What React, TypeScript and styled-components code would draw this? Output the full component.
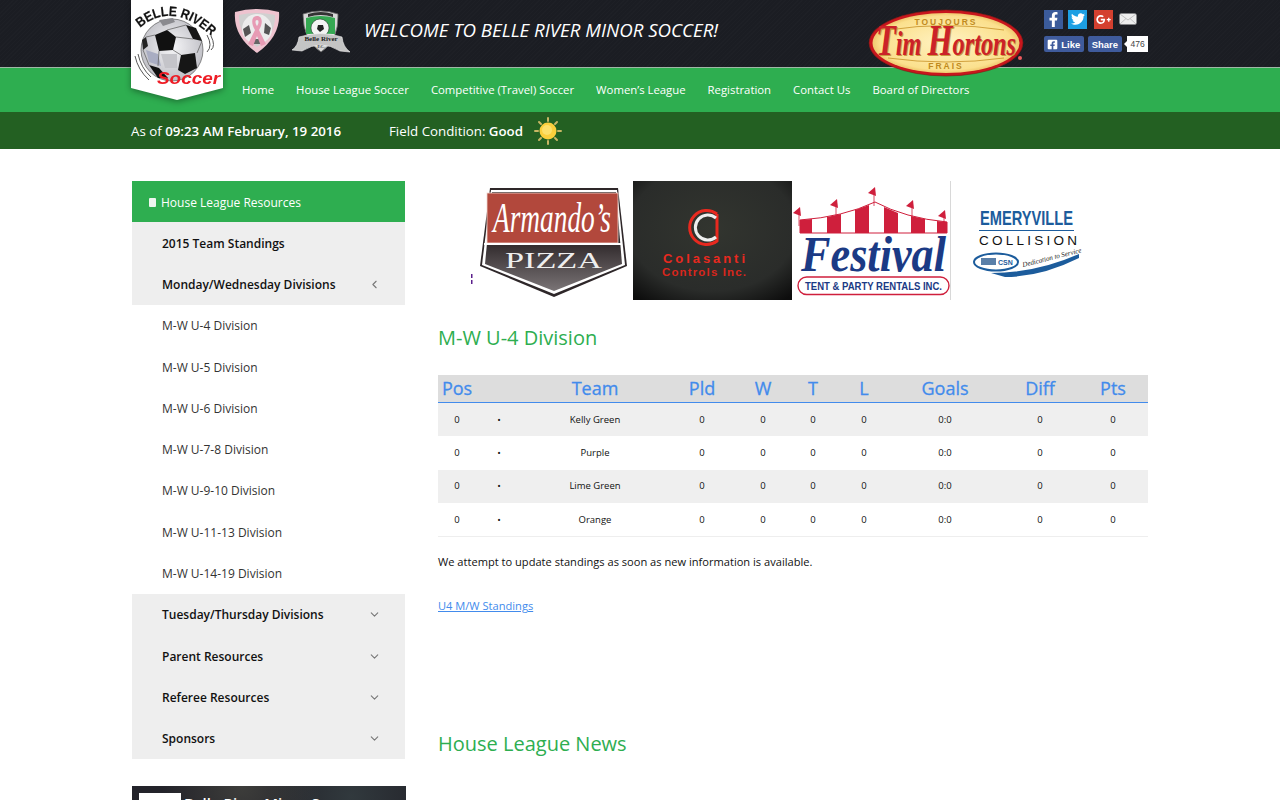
import React from 'react';
import styled, { createGlobalStyle } from 'styled-components';
import { FaFacebookF, FaFacebookSquare, FaTwitter, FaGooglePlusG } from 'react-icons/fa';
import { FiChevronDown, FiChevronLeft } from 'react-icons/fi';

const GlobalStyle = createGlobalStyle`
  html, body {
    margin: 0;
    padding: 0;
    background: #fff;
    overflow-x: hidden;
  }
  body {
    font-family: "Open Sans", "Liberation Sans", sans-serif;
    font-size: 12px;
    color: #222;
  }
`;

const Wrap = styled.div`
  width: 1016px;
  margin: 0 auto;
  position: relative;
`;

const TopBar = styled.header`
  height: 67px;
  background-color: #1b1d23;
  background-image: repeating-linear-gradient(135deg, rgba(255, 255, 255, 0.01) 0 1px, transparent 1px 3px);
  border-bottom: 1px solid #9fb8a6;
`;

const TopRow = styled(Wrap)`
  display: flex;
  align-items: flex-start;
  height: 67px;
`;

const LogoHolder = styled.div`
  position: absolute;
  left: -1px;
  top: 0;
  z-index: 3;
  width: 92px;
  height: 102px;
  filter: drop-shadow(0 2px 3px rgba(0, 0, 0, 0.35));
`;

const Badge = styled.div<{ $left: number; $width: number; $top: number }>`
  margin-left: ${({ $left }) => $left}px;
  margin-top: ${({ $top }) => $top}px;
  width: ${({ $width }) => $width}px;
  flex: none;
  line-height: 0;
`;

const Welcome = styled.div`
  margin-left: 13px;
  margin-top: 17px;
  width: 504px;
  flex: none;
  color: #fff;
  font-size: 18.7px;
  font-style: italic;
  font-weight: 400;
  line-height: 25px;
  white-space: nowrap;
`;

const TimHolder = styled.div`
  position: absolute;
  left: 736px;
  top: 8px;
  z-index: 3;
  line-height: 0;
`;

const Social = styled.div`
  position: absolute;
  left: 912px;
  top: 9px;
  width: 104px;
`;

const IconRow = styled.div`
  display: flex;
  align-items: center;
  height: 20px;
`;

const IconTile = styled.span<{ $bg: string; $gap: number; $size: number }>`
  display: flex;
  align-items: center;
  justify-content: center;
  width: 19px;
  height: 19px;
  margin-right: ${({ $gap }) => $gap}px;
  background: ${({ $bg }) => $bg};
  color: #fff;
  font-size: ${({ $size }) => $size}px;
`;

const ShareRow = styled.div`
  display: flex;
  align-items: center;
  height: 16px;
  margin-top: 7px;
`;

const FbButton = styled.span<{ $width: number }>`
  display: flex;
  align-items: center;
  justify-content: center;
  gap: 3px;
  width: ${({ $width }) => $width}px;
  height: 16px;
  margin-right: 4px;
  background: #3f5b9c;
  border-radius: 2px;
  color: #fff;
  font-family: "Liberation Sans", Arial, sans-serif;
  font-size: 9.5px;
  font-weight: 700;
`;

const Count = styled.span`
  position: relative;
  width: 21px;
  height: 16px;
  margin-left: 1px;
  background: #fff;
  color: #444;
  font-family: "Liberation Sans", Arial, sans-serif;
  font-size: 8.5px;
  line-height: 16px;
  text-align: center;

  &::before {
    content: '';
    position: absolute;
    left: -3px;
    top: 5px;
    border-top: 3px solid transparent;
    border-bottom: 3px solid transparent;
    border-right: 3px solid #fff;
  }
`;

const NavBar = styled.nav`
  height: 44px;
  background: #2eae50;
`;

const NavRow = styled(Wrap)`
  display: flex;
  align-items: center;
  gap: 22px;
  height: 44px;
  padding: 0 0 1px 110px;
  box-sizing: border-box;
`;

const NavLink = styled.a`
  color: #fff;
  font-size: 11.35px;
  text-decoration: none;
  white-space: nowrap;
`;

const StatusBar = styled.div`
  height: 37px;
  background: #236022;
`;

const StatusRow = styled(Wrap)`
  display: flex;
  align-items: center;
  height: 37px;
  color: #fff;
  font-size: 13.3px;

  b {
    font-weight: 600;
  }
`;

const AsOf = styled.div`
  width: 258px;
  margin-left: -1px;
  flex: none;
`;

const Condition = styled.div`
  width: 145px;
  flex: none;
`;

const Page = styled(Wrap)`
  display: flex;
  gap: 33px;
  padding-top: 32px;
  align-items: flex-start;
`;

const Sidebar = styled.aside`
  width: 273px;
  flex: none;
`;

const SideHead = styled.div`
  display: flex;
  align-items: center;
  gap: 5px;
  height: 41px;
  padding: 1px 0 0 17px;
  box-sizing: border-box;
  background: #2eae50;
  color: #fff;
  font-size: 12px;
`;

const DocIcon = styled.span`
  width: 7px;
  height: 9px;
  background: #eef6ef;
  border-radius: 1px;
`;

const SideRow = styled.a<{ $main?: boolean }>`
  display: flex;
  align-items: center;
  justify-content: space-between;
  height: 41.3px;
  padding: 1px 24px 0 30px;
  box-sizing: border-box;
  background: ${({ $main }) => ($main ? '#eeeeee' : '#ffffff')};
  color: ${({ $main }) => ($main ? '#111' : '#333')};
  font-size: 12px;
  font-weight: ${({ $main }) => ($main ? 600 : 400)};
  text-decoration: none;
  white-space: nowrap;

  svg {
    color: #777;
    font-size: 13px;
  }
`;

const Promo = styled.div`
  display: flex;
  gap: 3px;
  margin-top: 27px;
  width: 274px;
  height: 110px;
  padding: 7px 0 0 7px;
  box-sizing: border-box;
  background:
    radial-gradient(circle at 40% 0, rgba(110, 110, 90, 0.35), transparent 40%),
    radial-gradient(circle at 80% 10%, rgba(70, 90, 90, 0.4), transparent 35%),
    #23232a;
  color: #fff;
  font-size: 15px;
  font-weight: 600;
`;

const PromoLogo = styled.div`
  width: 42px;
  height: 50px;
  background: #fff;
`;

const Main = styled.main`
  width: 710px;
  flex: none;
`;

const Sponsors = styled.div`
  display: flex;
  padding-left: 32px;
  height: 119px;
`;

const SponsorBox = styled.div<{ $width: number; $edge?: boolean }>`
  width: ${({ $width }) => $width}px;
  height: 119px;
  flex: none;
  line-height: 0;
  ${({ $edge }) => ($edge ? 'border-right: 1px solid #d8d8d8; box-sizing: border-box;' : '')}
`;

const Heading = styled.h2<{ $top: number }>`
  margin: ${({ $top }) => $top}px 0 0;
  color: #2eae50;
  font-size: 20px;
  font-weight: 400;
  line-height: 28px;
`;

const Table = styled.table`
  width: 710px;
  margin-top: 23px;
  border-collapse: separate;
  border-spacing: 0;
  table-layout: fixed;
  border-bottom: 1px solid #eeeeee;
`;

const HeadCell = styled.th`
  height: 28px;
  padding: 0;
  box-sizing: border-box;
  background: #dddddd;
  border-bottom: 1px solid #428bec;
  color: #428bec;
  font-size: 18px;
  font-weight: 400;
  -webkit-text-stroke: 0.3px #428bec;
  line-height: 27px;
  text-align: center;

  &:last-child {
    padding-right: 4px;
  }
`;

const BodyRow = styled.tr<{ $shade: boolean }>`
  background: ${({ $shade }) => ($shade ? '#efefef' : '#ffffff')};
`;

const Cell = styled.td`
  height: 33.3px;
  padding: 0 0 1px;
  box-sizing: border-box;
  color: #111;
  font-size: 9.5px;
  text-align: center;

  &:last-child {
    padding-right: 4px;
  }
`;

const Note = styled.p`
  margin: 16px 0 0;
  color: #111;
  font-size: 11.1px;
  line-height: 17px;
`;

const DocLink = styled.a`
  display: inline-block;
  margin-top: 27px;
  color: #428bec;
  font-size: 11.1px;
  line-height: 17px;
  text-decoration: underline;
`;

const columns = [38, 46, 146, 68, 54, 46, 56, 106, 84, 66];
const headers = ['Pos', '', 'Team', 'Pld', 'W', 'T', 'L', 'Goals', 'Diff', 'Pts'];
const teams = ['Kelly Green', 'Purple', 'Lime Green', 'Orange'];
const navItems = [
  'Home',
  'House League Soccer',
  'Competitive (Travel) Soccer',
  'Women’s League',
  'Registration',
  'Contact Us',
  'Board of Directors',
];
const divisions = ['U-4', 'U-5', 'U-6', 'U-7-8', 'U-9-10', 'U-11-13', 'U-14-19'];
const lowerMenu = ['Tuesday/Thursday Divisions', 'Parent Resources', 'Referee Resources', 'Sponsors'];

function BallLogo(): JSX.Element {
  return (
    <svg width="92" height="102" viewBox="0 0 92 102">
      <defs>
        <path id="ballArc" d="M9 28 Q 40 1 78 34" fill="none" />
        <radialGradient id="ballFill" cx="0.5" cy="0.45" r="0.6">
          <stop offset="0" stopColor="#f6f6f8" />
          <stop offset="1" stopColor="#b9b9c0" />
        </radialGradient>
      </defs>
      <polygon points="0,0 92,0 92,88 46,100 0,88" fill="#fff" />
      <text fontFamily="'Liberation Sans', sans-serif" fontSize="13.5" fontWeight="700" fill="#111" stroke="#111" strokeWidth="0.2">
        <textPath href="#ballArc" textLength="80" lengthAdjust="spacingAndGlyphs">BELLE RIVER</textPath>
      </text>
      <circle cx="41" cy="50" r="31" fill="url(#ballFill)" stroke="#444" strokeWidth="0.6" />
      <polygon points="24,35 36,30 45,37 42,50 28,51" fill="#111" />
      <polygon points="55,25 65,28 71,41 62,39" fill="#161616" />
      <polygon points="11,40 15,37 17,46 12,50" fill="#222" />
      <polygon points="50,55 64,53 66,68 54,74 47,70" fill="#161616" />
      <polygon points="18,65 28,68 37,78 27,78" fill="#111" />
      <polygon points="15,50 27,54 30,66 18,62" fill="#a9adc2" />
      <polygon points="30,54 46,54 46,68 34,68" fill="#c4c4c9" />
      <polygon points="28,20 42,18 44,22 32,26" fill="#8a8a8f" />
      <path d="M15 37 L24 35 M36 30 L55 25 M45 37 L62 39 M28 51 L27 66 M42 50 L50 55 M12 50 L18 65 M66 53 L71 41" stroke="#666" strokeWidth="0.8" />
      <path d="M76 35 Q 82 46 76 52 M80 36 Q 85 46 80 50" stroke="#555" strokeWidth="1" fill="none" />
      <path d="M4 56 Q 7 70 18 80 M7 54 Q 10 68 20 77" stroke="#555" strokeWidth="1" fill="none" />
      <text
        x="26"
        y="84"
        fontFamily="'Liberation Sans', sans-serif"
        fontSize="16"
        fontStyle="italic"
        fontWeight="700"
        fill="#ee1c25"
        textLength="63"
        lengthAdjust="spacingAndGlyphs"
      >
        Soccer
      </text>
    </svg>
  );
}

function PinkShield(): JSX.Element {
  return (
    <svg width="46" height="45" viewBox="0 0 46 45">
      <path d="M1 3 Q 23 -3 45 3 Q 47 27 23 44 Q -1 27 1 3Z" fill="#eec3cf" />
      <path d="M5 6 Q 23 2 41 6 Q 42 25 23 38 Q 4 25 5 6Z" fill="#d0d0d0" />
      <circle cx="23" cy="20" r="15" fill="#ececec" />
      <polygon points="9,20 15,16 17,24 11,28" fill="#555" />
      <polygon points="31,14 37,19 35,26 30,24" fill="#555" />
      <polygon points="17,30 29,30 27,35 19,35" fill="#666" />
      <path d="M23 7 C 17 7 17 15 21 21 L 14 35 L 19 37 L 23 27 L 27 37 L 32 35 L 25 21 C 29 15 29 7 23 7Z M23 11 C 25 11 25 14 23 17 C 21 14 21 11 23 11Z" fill="#e79bb4" />
    </svg>
  );
}

function ClubShield(): JSX.Element {
  return (
    <svg width="60" height="46" viewBox="0 0 60 46">
      <path d="M12 4 Q 30 -2 47 4 Q 48 30 30 42 Q 12 30 12 4Z" fill="#d7d7d7" stroke="#666" strokeWidth="0.8" />
      <path d="M15 8 Q 30 4 44 8 L 44 24 L 15 24Z" fill="#35a852" />
      <path d="M17 4 Q 30 0 42 4 L 42 7 Q 30 3 17 7Z" fill="#333" />
      <circle cx="29" cy="18" r="9" fill="#f4f4f4" stroke="#222" strokeWidth="0.5" />
      <polygon points="27,15 32,15 33,19 29,22 26,19" fill="#222" />
      <path d="M1 40 Q 7 36 8 27 Q 30 20 51 27 Q 52 37 59 42 L 49 41 Q 30 29 11 41Z" fill="#c4c4c4" stroke="#f4f4f4" strokeWidth="0.6" />
      <text x="30" y="31" fontFamily="'Liberation Serif', serif" fontSize="7" fontWeight="700" fill="#222" textAnchor="middle">
        Belle River
      </text>
      <text x="30" y="38" fontFamily="'Liberation Serif', serif" fontSize="4" fontWeight="700" fill="#333" textAnchor="middle">
        F.C.
      </text>
    </svg>
  );
}

function TimWordmark({ fill, x, y }: { fill: string; x: number; y: number }): JSX.Element {
  return (
    <text
      x={x}
      y={y}
      fontFamily="'Liberation Serif', serif"
      fontSize="33"
      fontStyle="italic"
      fontWeight="700"
      fill={fill}
      textLength="140"
      lengthAdjust="spacingAndGlyphs"
    >
      <tspan fontSize="44">T</tspan>im <tspan fontSize="44">H</tspan>ortons
    </text>
  );
}

function TimHortons(): JSX.Element {
  return (
    <svg width="160" height="72" viewBox="0 0 160 72">
      <defs>
        <radialGradient id="timFill" cx="0.5" cy="0.5" r="0.6">
          <stop offset="0" stopColor="#fff3c4" />
          <stop offset="0.75" stopColor="#fbe08d" />
          <stop offset="1" stopColor="#d89a34" />
        </radialGradient>
      </defs>
      <ellipse cx="78" cy="35" rx="77" ry="33" fill="#c8161d" stroke="#7d1a14" strokeWidth="0.6" />
      <ellipse cx="78" cy="35" rx="73.5" ry="30" fill="url(#timFill)" />
      <path d="M20 22 Q 78 13 136 22 M20 50 Q 78 58 136 50" fill="none" stroke="#c79126" strokeWidth="0.8" />
      <text x="78" y="17" fontFamily="'Liberation Sans', sans-serif" fontSize="8.5" fontWeight="700" fill="#c08a20" textAnchor="middle" letterSpacing="2">
        TOUJOURS
      </text>
      <text x="78" y="61" fontFamily="'Liberation Sans', sans-serif" fontSize="8.5" fontWeight="700" fill="#c08a20" textAnchor="middle" letterSpacing="2">
        FRAIS
      </text>
      <TimWordmark fill="#c9983f" x={9} y={48} />
      <TimWordmark fill="#cb2229" x={8} y={47} />
      <circle cx="152" cy="50" r="2" fill="#ee5a5e" />
    </svg>
  );
}

function MailIcon(): JSX.Element {
  return (
    <svg width="18" height="12" viewBox="0 0 18 12">
      <rect x="0.5" y="0.5" width="17" height="11" rx="1.5" fill="#eeeeee" />
      <path d="M1 1 L9 7 L17 1 M1 11 L7 5.5 M17 11 L11 5.5" stroke="#b5b5b5" strokeWidth="0.8" fill="none" />
    </svg>
  );
}

function Sun(): JSX.Element {
  return (
    <svg width="28" height="28" viewBox="0 0 28 28">
      <g stroke="#c8b765" strokeWidth="2" strokeLinecap="round">
        <path d="M14 1 L14 4 M14 24 L14 27 M1 14 L4 14 M24 14 L27 14 M5 5 L7 7 M21 21 L23 23 M23 5 L21 7 M7 21 L5 23" />
      </g>
      <circle cx="14" cy="14" r="8.5" fill="#fbcf3c" />
      <circle cx="13" cy="13" r="5" fill="#fde06a" />
    </svg>
  );
}

function Armandos(): JSX.Element {
  return (
    <svg width="162" height="119" viewBox="0 0 162 119">
      <defs>
        <linearGradient id="armDark" x1="0" y1="0" x2="0" y2="1">
          <stop offset="0.5" stopColor="#2e2729" />
          <stop offset="1" stopColor="#7a7476" />
        </linearGradient>
      </defs>
      <rect x="1" y="93" width="1.5" height="4" fill="#5b1f8c" />
      <rect x="1" y="99" width="1.5" height="4" fill="#5b1f8c" />
      <path d="M20 7 L148 7 L157 85 L84 116 L10 85Z" fill="#2e2729" />
      <path d="M21 9 L147 9 L155 84 L84 113 L12 84Z" fill="#fff" />
      <path d="M22 11 L146 11 L152 83 L84 110 L15 83Z" fill="url(#armDark)" />
      <rect x="17" y="12" width="131" height="50" fill="#b2483c" stroke="#f0d8d0" strokeWidth="0.8" />
      <rect x="14" y="62" width="137" height="2" fill="#fff" />
      <text
        x="23"
        y="51"
        fontFamily="'Liberation Serif', serif"
        fontSize="43"
        fontStyle="italic"
        fill="#fff"
        textLength="118"
        lengthAdjust="spacingAndGlyphs"
      >
        Armando’s
      </text>
      <text x="35" y="87" fontFamily="'Liberation Serif', serif" fontSize="23" fill="#eeeeee" textLength="97" lengthAdjust="spacingAndGlyphs">
        PIZZA
      </text>
    </svg>
  );
}

function Colasanti(): JSX.Element {
  return (
    <svg width="159" height="119" viewBox="0 0 159 119">
      <defs>
        <radialGradient id="colBg" cx="0.5" cy="0.4" r="0.75">
          <stop offset="0" stopColor="#32352f" />
          <stop offset="0.7" stopColor="#2a2c2a" />
          <stop offset="1" stopColor="#0d0d0d" />
        </radialGradient>
      </defs>
      <rect width="159" height="119" fill="url(#colBg)" />
      <path d="M84 33 A 17 17 0 1 0 84 60 L 84 33" fill="none" stroke="#e8291f" strokeWidth="3" />
      <path d="M83 37 A 12.5 12.5 0 1 0 83 56" fill="none" stroke="#eeeeee" strokeWidth="3" />
      <text x="30" y="82" fontFamily="'Liberation Sans', sans-serif" fontSize="13" fontWeight="700" fill="#e8291f" textLength="82" lengthAdjust="spacing">
        Colasanti
      </text>
      <text x="29" y="95" fontFamily="'Liberation Sans', sans-serif" fontSize="11.5" fontWeight="700" fill="#d8261c" textLength="84" lengthAdjust="spacing">
        Controls Inc.
      </text>
    </svg>
  );
}

function Festival(): JSX.Element {
  const flags: [number, number][] = [[5, 29], [42, 21], [80, 9], [118, 22], [150, 32]];
  return (
    <svg width="157" height="119" viewBox="0 0 157 119">
      <path d="M7 39 Q 50 36 82 21 Q 112 37 154 41 L 154 52 L 7 52Z" fill="#fff" stroke="#cf1f3c" strokeWidth="1" />
      <path d="M7 39 L 19 38 L 19 52 L 7 52Z M34 36 L 48 33 L 48 52 L 34 52Z M62 29 L 76 24 L 76 52 L 62 52Z M91 26 L 105 32 L 105 52 L 91 52Z M118 35 L 132 38 L 132 52 L 118 52Z M144 40 L 154 41 L 154 52 L 144 52Z" fill="#cf1f3c" />
      {flags.map(([x, y]) => (
        <g key={x} fill="#cf1f3c">
          <path d={`M${x + 1} ${y + 2} L ${x + 1} ${y + 16}`} stroke="#cf1f3c" strokeWidth="0.8" />
          <polygon points={`${x - 5},${y + 3} ${x + 2},${y - 3} ${x + 3},${y + 6}`} />
        </g>
      ))}
      <text
        x="8"
        y="90"
        fontFamily="'Liberation Serif', serif"
        fontSize="50"
        fontStyle="italic"
        fontWeight="700"
        fill="#1b3a85"
        textLength="145"
        lengthAdjust="spacingAndGlyphs"
      >
        Festival
      </text>
      <rect x="5" y="96" width="151" height="17.5" rx="8.7" fill="#fff" stroke="#cf1f3c" strokeWidth="1.4" />
      <text x="12" y="109" fontFamily="'Liberation Sans', sans-serif" fontSize="10.5" fontWeight="700" fill="#1b3a85" textLength="137" lengthAdjust="spacingAndGlyphs">
        TENT &amp; PARTY RENTALS INC.
      </text>
    </svg>
  );
}

function Emeryville(): JSX.Element {
  return (
    <svg width="150" height="119" viewBox="0 0 150 119">
      <text x="29" y="44" fontFamily="'Liberation Sans', sans-serif" fontSize="21" fontWeight="700" fill="#1c5c9c" textLength="93" lengthAdjust="spacingAndGlyphs">
        EMERYVILLE
      </text>
      <rect x="28" y="49" width="95" height="1" fill="#1c5c9c" />
      <text x="28" y="64" fontFamily="'Liberation Sans', sans-serif" fontSize="13.5" fill="#111" textLength="98" lengthAdjust="spacing">
        COLLISION
      </text>
      <path d="M40 92 Q 85 92 128 73 L 128 77 Q 90 96 54 96Z" fill="#1c5c9c" />
      <ellipse cx="45" cy="81" rx="22" ry="8.5" fill="#fff" stroke="#1c5c9c" strokeWidth="2" />
      <rect x="30" y="77" width="15" height="7" fill="#5a7fa8" />
      <text x="47" y="84" fontFamily="'Liberation Sans', sans-serif" fontSize="7" fontWeight="700" fill="#1c5c9c">
        CSN
      </text>
      <text x="72" y="86" fontFamily="'Liberation Serif', serif" fontSize="7" fontStyle="italic" fill="#222" transform="rotate(-14 72 86)">
        Dedication to Service
      </text>
    </svg>
  );
}

export default function App(): JSX.Element {
  return (
    <>
      <GlobalStyle />
      <TopBar>
        <TopRow>
          <LogoHolder>
            <BallLogo />
          </LogoHolder>
          <Badge $left={102} $width={46} $top={9}>
            <PinkShield />
          </Badge>
          <Badge $left={11} $width={60} $top={10}>
            <ClubShield />
          </Badge>
          <Welcome>WELCOME TO BELLE RIVER MINOR SOCCER!</Welcome>
          <TimHolder>
            <TimHortons />
          </TimHolder>
          <Social>
            <IconRow>
              <IconTile $bg="#3b5b9a" $gap={5} $size={15}>
                <FaFacebookF />
              </IconTile>
              <IconTile $bg="#1d9fe3" $gap={7} $size={14}>
                <FaTwitter />
              </IconTile>
              <IconTile $bg="#d4402f" $gap={6} $size={15}>
                <FaGooglePlusG />
              </IconTile>
              <MailIcon />
            </IconRow>
            <ShareRow>
              <FbButton $width={40}>
                <FaFacebookSquare size={11} />
                Like
              </FbButton>
              <FbButton $width={35}>Share</FbButton>
              <Count>476</Count>
            </ShareRow>
          </Social>
        </TopRow>
      </TopBar>
      <NavBar>
        <NavRow>
          {navItems.map((item) => (
            <NavLink key={item}>{item}</NavLink>
          ))}
        </NavRow>
      </NavBar>
      <StatusBar>
        <StatusRow>
          <AsOf>
            As of <b>09:23 AM February, 19 2016</b>
          </AsOf>
          <Condition>
            Field Condition: <b>Good</b>
          </Condition>
          <Sun />
        </StatusRow>
      </StatusBar>
      <Page>
        <Sidebar>
          <SideHead>
            <DocIcon />
            House League Resources
          </SideHead>
          <SideRow $main>2015 Team Standings</SideRow>
          <SideRow $main>
            Monday/Wednesday Divisions
            <FiChevronLeft />
          </SideRow>
          {divisions.map((d) => (
            <SideRow key={d}>M-W {d} Division</SideRow>
          ))}
          {lowerMenu.map((m) => (
            <SideRow $main key={m}>
              {m}
              <FiChevronDown />
            </SideRow>
          ))}
          <Promo>
            <PromoLogo />
            Belle River Minor Soccer
          </Promo>
        </Sidebar>
        <Main>
          <Sponsors>
            <SponsorBox $width={162}>
              <Armandos />
            </SponsorBox>
            <SponsorBox $width={1} />
            <SponsorBox $width={159}>
              <Colasanti />
            </SponsorBox>
            <SponsorBox $width={1} />
            <SponsorBox $width={158} $edge>
              <Festival />
            </SponsorBox>
            <SponsorBox $width={150}>
              <Emeryville />
            </SponsorBox>
          </Sponsors>
          <Heading $top={24}>M-W U-4 Division</Heading>
          <Table>
            <colgroup>
              {columns.map((w, i) => (
                <col key={i} style={{ width: w }} />
              ))}
            </colgroup>
            <thead>
              <tr>
                {headers.map((h, i) => (
                  <HeadCell key={i}>{h}</HeadCell>
                ))}
              </tr>
            </thead>
            <tbody>
              {teams.map((team, i) => (
                <BodyRow key={team} $shade={i % 2 === 0}>
                  <Cell>0</Cell>
                  <Cell>•</Cell>
                  <Cell>{team}</Cell>
                  <Cell>0</Cell>
                  <Cell>0</Cell>
                  <Cell>0</Cell>
                  <Cell>0</Cell>
                  <Cell>0:0</Cell>
                  <Cell>0</Cell>
                  <Cell>0</Cell>
                </BodyRow>
              ))}
            </tbody>
          </Table>
          <Note>We attempt to update standings as soon as new information is available.</Note>
          <DocLink>U4 M/W Standings</DocLink>
          <Heading $top={116}>House League News</Heading>
        </Main>
      </Page>
    </>
  );
}
